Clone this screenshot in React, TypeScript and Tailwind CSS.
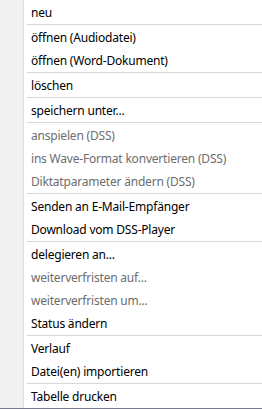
import * as React from "react";

type Entry = { label: string; disabled?: boolean } | "sep";

const entries: Entry[] = [
  { label: "neu" },
  "sep",
  { label: "öffnen (Audiodatei)" },
  { label: "öffnen (Word-Dokument)" },
  "sep",
  { label: "löschen" },
  "sep",
  { label: "speichern unter..." },
  "sep",
  { label: "anspielen (DSS)", disabled: true },
  { label: "ins Wave-Format konvertieren (DSS)", disabled: true },
  { label: "Diktatparameter ändern (DSS)", disabled: true },
  "sep",
  { label: "Senden an E-Mail-Empfänger" },
  { label: "Download vom DSS-Player" },
  "sep",
  { label: "delegieren an..." },
  { label: "weiterverfristen auf...", disabled: true },
  { label: "weiterverfristen um...", disabled: true },
  { label: "Status ändern" },
  "sep",
  { label: "Verlauf" },
  { label: "Datei(en) importieren" },
  "sep",
  { label: "Tabelle drucken" },
];

export default function App() {
  return (
    <div
      className="w-[262px] h-[409px] flex flex-col bg-white overflow-hidden"
      style={{ fontFamily: '"Noto Sans", "Open Sans", Arial, sans-serif' }}
    >
      <div className="flex flex-1">
        <div className="w-[24px] bg-[#f0f0f0] border-r border-[#dedede]" />
        <div className="flex-1 flex flex-col pt-[1px]">
          {entries.map((e, i) =>
            e === "sep" ? (
              <div key={i} className="h-[2px] ml-[3px] border-t border-[#d7d7d7]" />
            ) : (
              <div
                key={i}
                className={
                  "h-[23px] flex items-center pl-[7px] text-[12px] tracking-[-0.2px] whitespace-nowrap " +
                  (e.disabled ? "text-[#6d6d6d]" : "text-black")
                }
              >
                {e.label}
              </div>
            )
          )}
        </div>
      </div>
      <div className="h-[1px] bg-[#7a7a8c]" />
    </div>
  );
}
